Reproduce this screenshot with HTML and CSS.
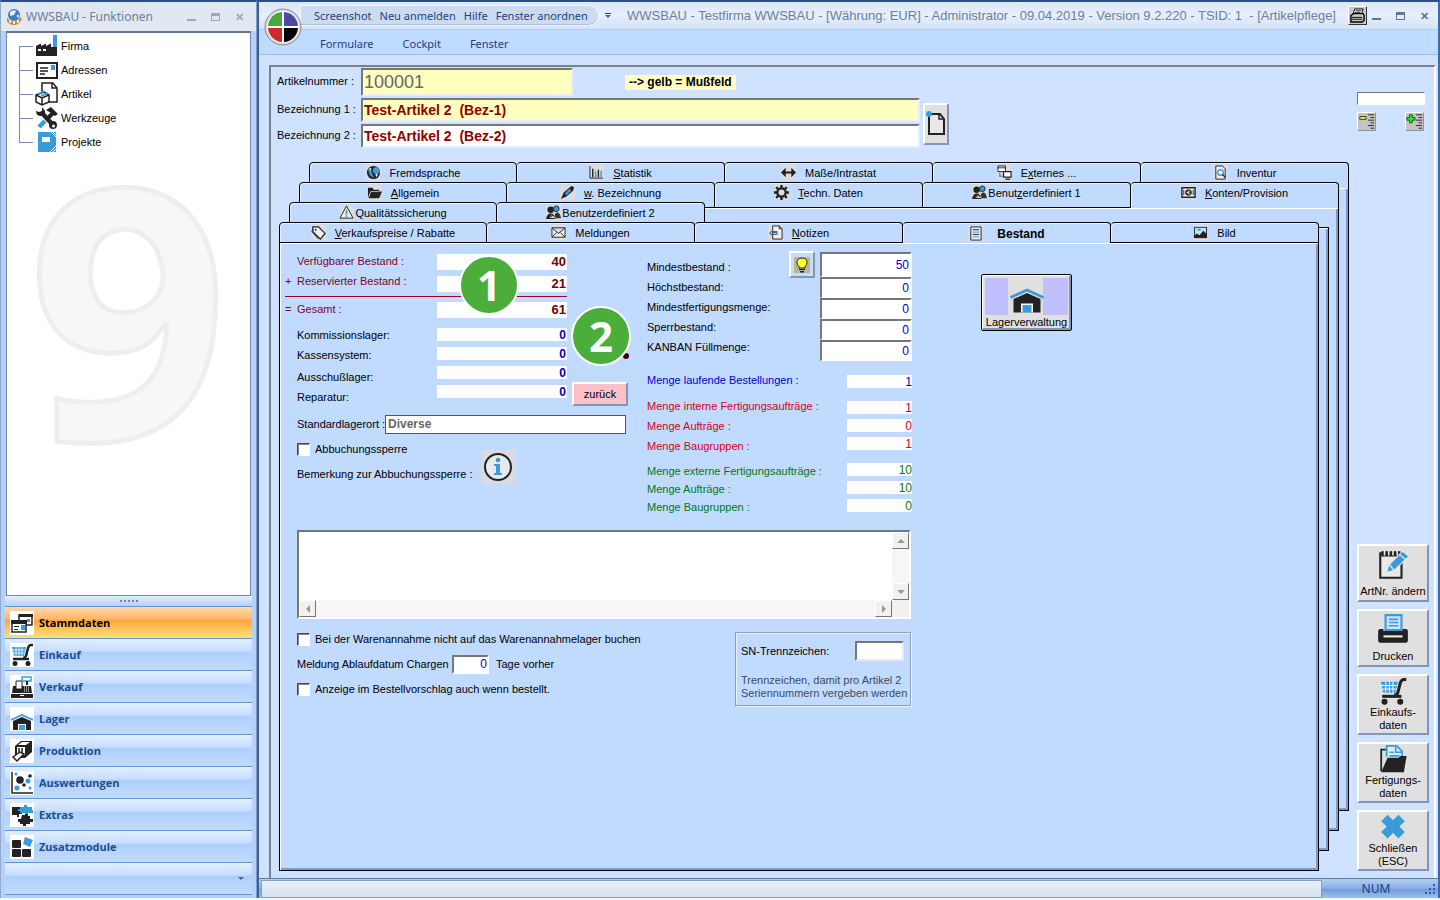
FILE: index.html
```html
<!doctype html>
<html lang="de">
<head>
<meta charset="utf-8">
<meta name="viewport" content="width=device-width,initial-scale=1">
<title>WWSBAU - Artikelpflege</title>
<link rel="stylesheet" href="styles.css">
</head>
<body>

<!-- icons -->
<svg class="sprite" width="0" height="0" aria-hidden="true">
	<symbol id="i-app" viewBox="0 0 16 16"><circle cx="8" cy="6" r="6" fill="#3a7fc4"/><path d="M4 3q3-3 6-1L8 6 4 7z" fill="#e4f2ff"/><path d="M10 7l3-2v4z" fill="#bfe0f8"/><path d="M1 8q2 5 7 4 5 0 6-4l2 2q-3 6-8 6T1 12z" fill="#d9822b"/><path d="M3 11h2v3H3zM7 12h2v3H7zM11 11h2v3h-2z" fill="#fff0d8"/></symbol>
	<symbol id="i-firma" viewBox="0 0 24 24"><path d="M1 12l5-2.500V12l5-2.500V12l5-2.500V13h6v9H1z" fill="#222"/><path d="M18 1h4v12h-4z" fill="#3a9bd9"/><path d="M3 15h3v2H3zM8 15h3v2H8z" fill="#fff"/></symbol>
	<symbol id="i-adressen" viewBox="0 0 24 24"><path d="M2 5h20v15H2z" fill="#fff" stroke="#222" stroke-width="2"/><path d="M5 10h8M5 13h8M5 16h5" stroke="#222" stroke-width="1.500"/><path d="M16 7h4v5h-4z" fill="#3a9bd9"/></symbol>
	<symbol id="i-artikel" viewBox="0 0 24 24"><path d="M7 1h11l4 5v14H7z" fill="#fff" stroke="#222" stroke-width="1.500"/><path d="M17 1v5h5" fill="none" stroke="#222" stroke-width="1.500"/><path d="M1 13l8-3 5 3v7l-7 3-6-3z" fill="#fff" stroke="#222" stroke-width="1.500"/><path d="M1 13l6 3 7-3M7 16v7" fill="none" stroke="#222" stroke-width="1.500"/><path d="M3 12l7-3M6 14l7-3" stroke="#3a9bd9" stroke-width="1.800"/></symbol>
	<symbol id="i-werkzeuge" viewBox="0 0 24 24"><path d="M6 6l12 13" stroke="#222" stroke-width="4.500"/><path d="M1 5q0 5 5 5 5 0 4-5L7 1l0 4-3 1z" fill="#222"/><circle cx="18" cy="19" r="4" fill="#222"/><circle cx="18.500" cy="20" r="1.500" fill="#fff"/><path d="M19 6L11 14" stroke="#222" stroke-width="4"/><path d="M11 4l5-3 7 7-3 2-4-3z" fill="#222"/><path d="M10 15l-6 6" stroke="#3a9bd9" stroke-width="4.500"/></symbol>
	<symbol id="i-projekte" viewBox="0 0 24 24"><path d="M3 2h18v20H3z" fill="#3a9bd9"/><path d="M7 7h8v5H7z" fill="#fff"/><path d="M16 2l5 5M18 2l3 3M15 22l6-6M18 22l3-3" stroke="#fff"/></symbol>
	<symbol id="i-stamm" viewBox="0 0 24 24"><path d="M9 4h13v10H9z" fill="#fff" stroke="#222" stroke-width="1.500"/><path d="M9 3h14v3H9z" fill="#222"/><path d="M17 8h3v3h-3z" fill="#3a9bd9"/><path d="M2 10h14v11H2z" fill="#fff" stroke="#222" stroke-width="1.500"/><path d="M1 9h16v4H1z" fill="#222"/><path d="M4 15h5v1H4zM4 18h4v1H4z" fill="#222"/><path d="M11 14h4v5h-4z" fill="#3a9bd9"/></symbol>
	<symbol id="i-cart" viewBox="0 0 24 24"><path d="M2 4h14l-2 9H4z" fill="#3a9bd9"/><path d="M2 7h13M3 10h12M6 4v9M9 4v9M12 4v9" stroke="#fff" stroke-width=".8"/><path d="M23 2h-2q-2 0-3 3l-2 8q-1 2-3 2" fill="none" stroke="#222" stroke-width="2.500"/><path d="M3 16h16" stroke="#222" stroke-width="2.500"/><circle cx="5" cy="20.500" r="2.500" fill="#222"/><circle cx="18" cy="20.500" r="2.500" fill="#222"/></symbol>
	<symbol id="i-kasse" viewBox="0 0 24 24"><path d="M1 19h22v4H1z" fill="#222"/><path d="M3 11h18l1 7H2z" fill="#222"/><path d="M6 6h6v8H6z" fill="#fff" stroke="#222"/><path d="M12 2h9v4h-9z" fill="#fff" stroke="#3a9bd9" stroke-width="1.500"/><path d="M17 6v4" stroke="#222" stroke-width="2"/><path d="M14 12h6M14 14h6M14 16h6" stroke="#fff" stroke-dasharray="1 1"/><path d="M10 20h4v1h-4z" fill="#fff"/></symbol>
	<symbol id="i-lager" viewBox="0 0 24 24"><path d="M1 13l11-5 11 5" fill="none" stroke="#3a9bd9" stroke-width="1.800"/><path d="M3 14l9-4 9 4v9H3z" fill="#222"/><path d="M8 17h8v6H8z" fill="#fff"/><path d="M9 18h6v5H9z" fill="#3a9bd9"/></symbol>
	<symbol id="i-produktion" viewBox="0 0 24 24"><path d="M5 7l6-5h11v11l-7 6H5z" fill="#222"/><path d="M7 8h8v8H7z" fill="#fff"/><path d="M8 6l4-3h8l-4 3z" fill="#fff"/><path d="M9 9v6M12 9v6" stroke="#222" stroke-width="1.500"/><path d="M3 18l7-5 4 2-7 7z" fill="#fff" stroke="#222" stroke-width="1.500"/></symbol>
	<symbol id="i-auswertung" viewBox="0 0 24 24"><path d="M2 1v21h21" fill="none" stroke="#222" stroke-width="1.500"/><circle cx="10" cy="9" r="3.800" fill="#222"/><circle cx="20" cy="5" r="1.800" fill="#222"/><circle cx="14" cy="14" r="1.800" fill="#222"/><circle cx="6" cy="3" r="1.500" fill="#3a9bd9"/><circle cx="18" cy="10" r="2.500" fill="#3a9bd9"/><circle cx="7" cy="17" r="2.500" fill="#3a9bd9"/><circle cx="20" cy="17" r="1.500" fill="#3a9bd9"/></symbol>
	<symbol id="i-extras" viewBox="0 0 24 24"><path d="M2 4h8v4h2v3h-3v3H7v-2H2z" fill="#222"/><path d="M10 4h4V2h3v2h5v3h1v3h-5v2h-3v-2h-5V8h-2V6h2z" fill="#3a9bd9"/><path d="M12 12h3v-1h3v2h2v3h3v3h-3v2h-4v2h-3v-2h-3v-2H8v-3h3z" fill="#222"/></symbol>
	<symbol id="i-module" viewBox="0 0 24 24"><rect x="2" y="5" width="9" height="8" rx="1" fill="#222"/><rect x="2" y="14" width="9" height="8" rx="1" fill="#222"/><rect x="12" y="14" width="9" height="8" rx="1" fill="#222"/><path d="M15 2l8 3-3 7-7-3z" fill="#3a9bd9"/></symbol>

	<symbol id="i-globe" viewBox="0 0 16 16"><circle cx="8" cy="8" r="7" fill="#222"/><path d="M8 3l5-1 2 6-5 2-3-3zM2 4l3 1 2 5 2 4-5-3z" fill="#3a9bd9"/><path d="M3 3l3 1-1 2zM10 10l3-1-2 4z" fill="#fff"/></symbol>
	<symbol id="i-stat" viewBox="0 0 16 16"><path d="M1 1v13h14" fill="none" stroke="#222"/><path d="M4 4v9M10 5v8" stroke="#222" stroke-width="1.500"/><path d="M7 7v6M13 6v7" stroke="#3a9bd9" stroke-width="1.500"/></symbol>
	<symbol id="i-arrows" viewBox="0 0 16 16"><path d="M0 8l5-5v4h6V3l5 5-5 5V9H5v4z" fill="#222"/></symbol>
	<symbol id="i-extern" viewBox="0 0 16 16"><path d="M1 1h8v6H1zM1 3h8" fill="#fff" stroke="#222"/><path d="M7 7h8v6H7zM9 15h5" fill="#fff" stroke="#222" stroke-width="1.300"/><path d="M3 8v4h3" fill="none" stroke="#3a9bd9" stroke-width="1.500"/></symbol>
	<symbol id="i-inventur" viewBox="0 0 16 16"><path d="M3 1h7l3 3v11H3z" fill="#eee" stroke="#222"/><circle cx="8" cy="8" r="3" fill="#fff" stroke="#3a9bd9" stroke-width="1.500"/><path d="M10 10l3 3" stroke="#222" stroke-width="1.500"/></symbol>
	<symbol id="i-folder" viewBox="0 0 16 16"><path d="M1 14V3h5l1 2h6v2H4z" fill="#222"/><path d="M4 7h12l-3 7H2z" fill="#222"/><path d="M2 12l2-5h9" fill="none" stroke="#ddd" stroke-width=".7"/></symbol>
	<symbol id="i-pen" viewBox="0 0 16 16"><path d="M1 15l3-7 8-7 3 1-1 4-7 6z" fill="#222"/><path d="M5 9l5-5 2 2-5 5z" fill="#3a9bd9"/></symbol>
	<symbol id="i-gear" viewBox="0 0 16 16"><circle cx="8" cy="8" r="4.500" fill="none" stroke="#222" stroke-width="2.500"/><path d="M8 0v3M8 13v3M0 8h3M13 8h3M2.300 2.300l2 2M11.700 11.700l2 2M13.700 2.300l-2 2M4.300 11.700l-2 2" stroke="#222" stroke-width="2.500"/></symbol>
	<symbol id="i-users" viewBox="0 0 16 16"><circle cx="5" cy="5" r="3.500" fill="#222"/><circle cx="11" cy="4" r="3" fill="#3a9bd9" stroke="#222"/><path d="M0 15q1-6 5-6t5 6z" fill="#222"/><path d="M9 14q0-6 3-6t4 6z" fill="#333"/><path d="M6 11l2 3M4 13h6" stroke="#fff"/></symbol>
	<symbol id="i-money" viewBox="0 0 16 16"><path d="M1 3h14v10H1z" fill="#fff" stroke="#222" stroke-width="1.500"/><circle cx="8" cy="8" r="3.500" fill="#222"/><path d="M10 6.500q-3-1-3 1.500t3 1.500M6 8h3" fill="none" stroke="#fff" stroke-width=".8"/><path d="M3 5v6M13 5v6" stroke="#222"/></symbol>
	<symbol id="i-warn" viewBox="0 0 16 16"><path d="M8 1l7 13H1z" fill="#eee" stroke="#222"/><path d="M8 5v5M8 11v2" stroke="#3a9bd9" stroke-width="1.800"/></symbol>
	<symbol id="i-tag" viewBox="0 0 16 16"><path d="M2 2h6l7 7-5 6-8-8z" fill="#eee" stroke="#222" stroke-width="1.300"/><circle cx="5" cy="5" r="1" fill="#222"/><path d="M2 4l-1 3 7 8" fill="none" stroke="#222"/></symbol>
	<symbol id="i-mail" viewBox="0 0 16 16"><path d="M1 3h14v10H1zM1 3l7 6 7-6M1 13l5-5M15 13l-5-5" fill="#eee" stroke="#222"/></symbol>
	<symbol id="i-note" viewBox="0 0 16 16"><path d="M5 1h7l3 3v11H5z" fill="#eee" stroke="#222"/><path d="M12 1v3h3" fill="none" stroke="#222"/><path d="M10 7H4q-3 1-1 3h6q2-1 0-2H5" fill="none" stroke="#3b6b8f" stroke-width="1.200"/></symbol>
	<symbol id="i-list" viewBox="0 0 16 16"><path d="M3 1h11v14H3z" fill="#e3eef8" stroke="#222"/><path d="M5 4h7M5 9h7" stroke="#222"/><path d="M5 6.500h7M5 11.500h7" stroke="#3a9bd9"/></symbol>
	<symbol id="i-image" viewBox="0 0 16 16"><path d="M1 2h14v12H1z" fill="#222"/><path d="M2 3h12v6l-3-3-4 5-3-2-2 2z" fill="#bfe0f8"/><path d="M5 4h3v2H5z" fill="#3a9bd9"/></symbol>

	<symbol id="i-print" viewBox="0 0 32 32"><path d="M9 2h15v14H9z" fill="#cfe6f6" stroke="#3a9bd9" stroke-width="2"/><path d="M12 6h9M12 9h9M12 12h9" stroke="#3a9bd9" stroke-width="1.500"/><path d="M2 17q0-2 2-2h3v2h18v-2h3q2 0 2 2v9q0 2-2 2H4q-2 0-2-2z" fill="#222"/><path d="M7 21h18v2H7z" fill="#eee"/></symbol>
	<symbol id="i-edit" viewBox="0 0 32 32"><path d="M4 5h20v23H4z" fill="#e9e9e9" stroke="#222" stroke-width="2"/><path d="M5 3h18v5H5z" fill="#222"/><path d="M8 2v5M12 2v5M16 2v5M20 2v5" stroke="#e9e9e9" stroke-width="1.500"/><path d="M10 23l2-7L25 3l6 5-14 13z" fill="#3a9bd9" stroke="#e9e9e9"/><path d="M13 16l4 5M22 6l6 5" stroke="#e9e9e9" stroke-width="1.200"/></symbol>
	<symbol id="i-files" viewBox="0 0 32 32"><path d="M9 13V1h11l6 6v8" fill="#dcecf6" stroke="#3a9bd9" stroke-width="2"/><path d="M19 2v6h6M12 8h5M12 12h11" fill="none" stroke="#3a9bd9" stroke-width="1.800"/><path d="M3 29V5h5" fill="none" stroke="#222" stroke-width="2"/><path d="M3 30l7-16h12l2-2h7l-3 18z" fill="#222"/></symbol>
	<symbol id="i-close" viewBox="0 0 32 32"><path d="M3 9l7-7 6 6 6-6 7 7-6 6 6 6-7 7-6-6-6 6-7-7 6-6z" fill="#3a9bd9"/></symbol>
	<symbol id="i-page" viewBox="0 0 20 28"><path d="M3 4h11l4 5v15H3z" fill="#e8e8e8" stroke="#222" stroke-width="2"/><path d="M13 4v5h5" fill="none" stroke="#222" stroke-width="1.500"/><circle cx="3" cy="4" r="3" fill="#3a9bd9"/></symbol>
	<symbol id="i-bulb" viewBox="0 0 16 16"><path d="M0 0h16v16H0z" fill="#b9b59a"/><path d="M8 1q5 0 5 4.500 0 2-2 4V11H5V9.500q-2-2-2-4Q3 1 8 1z" fill="#ff3" stroke="#222"/><path d="M5 12h6v1H5zM6 14h4v1.500H6z" fill="#222"/></symbol>
	<symbol id="i-info" viewBox="0 0 30 30"><circle cx="15" cy="15" r="13" fill="#e6eaee" stroke="#222" stroke-width="2"/><circle cx="15" cy="8" r="2.300" fill="#3a9bd9"/><path d="M11 12h6v9h2v2h-8v-2h2v-7h-2z" fill="#3a9bd9"/></symbol>
	<symbol id="i-minus" viewBox="0 0 19 19"><path d="M11 2h7M14 5h4M11 8h7M14 11h4M11 14h7M14 17h4" stroke="#222"/><path d="M2 4h7v3H2z" fill="#ff3" stroke="#222"/></symbol>
	<symbol id="i-plus" viewBox="0 0 19 19"><path d="M11 2h7M14 5h4M11 8h7M14 11h4M11 14h7M14 17h4" stroke="#222"/><path d="M4 2h3v3h3v3H7v3H4V8H1V5h3z" fill="#2e2" stroke="#151"/></symbol>
	<symbol id="i-oldprint" viewBox="0 0 16 16"><path d="M5 1h9l-2 6H3z" fill="#fff" stroke="#000"/><path d="M6 3h6M5 5h6" stroke="#000"/><path d="M1 8l3-2h10l1 2v5l-2 2H1z" fill="#ccc" stroke="#000" stroke-width="1.500"/><path d="M2 10h11M2 12h11" stroke="#000"/></symbol>
</svg>

<div class="desktop">

<aside class="win funcs">
	<header class="titlebar">
		<svg class="app"><use href="#i-app"/></svg>
		<h2>WWSBAU - Funktionen</h2>
		<div class="winbtns dim"><button class="min" aria-label="Minimieren"></button><button class="max" aria-label="Maximieren"></button><button class="x" aria-label="Schließen">✕</button></div>
	</header>
	<div class="tree">
		<ul>
			<li><a href="#firma"><svg><use href="#i-firma"/></svg>Firma</a></li>
			<li><a href="#adressen"><svg><use href="#i-adressen"/></svg>Adressen</a></li>
			<li><a href="#artikel"><svg><use href="#i-artikel"/></svg>Artikel</a></li>
			<li><a href="#werkzeuge"><svg><use href="#i-werkzeuge"/></svg>Werkzeuge</a></li>
			<li><a href="#projekte"><svg><use href="#i-projekte"/></svg>Projekte</a></li>
		</ul>
		<div class="nine">9</div>
	</div>
	<div class="splitter"><i></i><i></i><i></i><i></i><i></i></div>
	<nav class="modules">
		<button class="on"><svg><use href="#i-stamm"/></svg>Stammdaten</button>
		<button><svg><use href="#i-cart"/></svg>Einkauf</button>
		<button><svg><use href="#i-kasse"/></svg>Verkauf</button>
		<button><svg><use href="#i-lager"/></svg>Lager</button>
		<button><svg><use href="#i-produktion"/></svg>Produktion</button>
		<button><svg><use href="#i-auswertung"/></svg>Auswertungen</button>
		<button><svg><use href="#i-extras"/></svg>Extras</button>
		<button><svg><use href="#i-module"/></svg>Zusatzmodule</button>
	</nav>
	<div class="navfoot"><button aria-label="Schaltflächen konfigurieren"><span class="tri"></span></button></div>
</aside>

<main class="win app-win">
	<button class="orb" aria-label="Menü">
		<svg viewBox="0 0 38 38"><circle cx="19" cy="19" r="18" fill="#d4d6da" stroke="#8b8f98"/><circle cx="19" cy="19" r="16" fill="#fff"/><path d="M18 18V4A15 15 0 0 0 4 18z" fill="#4aa83c"/><path d="M20 18V4A15 15 0 0 1 34 18z" fill="#4a4aa0"/><path d="M18 20v14A15 15 0 0 1 4 20z" fill="#d02a2a"/><path d="M20 20v14A15 15 0 0 0 34 20z" fill="#000"/></svg>
	</button>
	<header class="titlebar">
		<div class="quick">
			<a href="#screenshot">Screenshot</a>
			<a href="#anmelden">Neu anmelden</a>
			<a href="#hilfe">Hilfe</a>
			<a href="#anordnen">Fenster anordnen</a>
		</div>
		<button class="more" aria-label="Anpassen"><span class="tri"></span></button>
		<h1>WWSBAU - Testfirma WWSBAU - [Währung: EUR] - Administrator - 09.04.2019 - Version 9.2.220 - TSID: 1&nbsp; - [Artikelpflege]</h1>
		<button class="oldprint" aria-label="Drucken"><svg><use href="#i-oldprint"/></svg></button>
		<div class="winbtns"><button class="min" aria-label="Minimieren"></button><button class="max" aria-label="Maximieren"></button><button class="x" aria-label="Schließen">✕</button></div>
	</header>
	<nav class="ribbon">
		<a href="#formulare">Formulare</a>
		<a href="#cockpit">Cockpit</a>
		<a href="#fenster">Fenster</a>
	</nav>

	<div class="form">
		<div class="main">
			<div class="head">
				<div class="fieldgrid">
					<label for="artnr">Artikelnummer :</label>
					<div class="nr"><input id="artnr" class="must" value="100001"><b class="hint">--&gt; gelb = Mußfeld</b></div>
					<label for="bez1">Bezeichnung 1 :</label>
					<input id="bez1" class="bez must" value="Test-Artikel 2&nbsp; (Bez-1)">
					<label for="bez2">Bezeichnung 2 :</label>
					<input id="bez2" class="bez" value="Test-Artikel 2&nbsp; (Bez-2)">
				</div>
				<button class="btn doc" aria-label="Text"><svg><use href="#i-page"/></svg></button>
			</div>

			<div class="stack">
				<div class="layer l1">
					<div class="tabs">
						<button><svg><use href="#i-globe"/></svg>Fremdsprache</button>
						<button><svg><use href="#i-stat"/></svg><span><u>S</u>tatistik</span></button>
						<button><svg><use href="#i-arrows"/></svg>Maße/Intrastat</button>
						<button><svg><use href="#i-extern"/></svg><span>E<u>x</u>ternes ...</span></button>
						<button class="open"><svg><use href="#i-inventur"/></svg>Inventur</button>
					</div>
					<div class="page"></div>
				</div>
				<div class="layer l2">
					<div class="tabs">
						<button><svg><use href="#i-folder"/></svg><span><u>A</u>llgemein</span></button>
						<button><svg><use href="#i-pen"/></svg><span><u>w</u>. Bezeichnung</span></button>
						<button><svg><use href="#i-gear"/></svg><span><u>T</u>echn. Daten</span></button>
						<button class="tight"><svg><use href="#i-users"/></svg><span>Benut<u>z</u>erdefiniert 1</span></button>
						<button class="open"><svg><use href="#i-money"/></svg><span><u>K</u>onten/Provision</span></button>
					</div>
					<div class="page"></div>
				</div>
				<div class="layer l3">
					<div class="tabs">
						<button class="tight"><svg><use href="#i-warn"/></svg>Qualitätssicherung</button>
						<button class="tight"><svg><use href="#i-users"/></svg>Benutzerdefiniert 2</button>
					</div>
					<div class="page"></div>
				</div>
				<div class="layer l4">
					<div class="tabs">
						<button><svg><use href="#i-tag"/></svg><span><u>V</u>erkaufspreise / Rabatte</span></button>
						<button><svg><use href="#i-mail"/></svg>Meldungen</button>
						<button><svg><use href="#i-note"/></svg><span><u>N</u>otizen</span></button>
						<button class="open current"><svg><use href="#i-list"/></svg>Bestand</button>
						<button><svg><use href="#i-image"/></svg>Bild</button>
					</div>
					<div class="page">

						<div class="upper">
							<section class="stock">
								<div class="cols">
									<div class="labels">
										<label class="sum" for="verf"><span></span>Verfügbarer Bestand :</label>
										<label class="sum" for="res"><span>+</span>Reservierter Bestand :</label>
										<div class="rule"></div>
										<label class="sum" for="ges"><span>=</span>Gesamt :</label>
										<label class="first" for="komm">Kommissionslager:</label>
										<label for="kasse">Kassensystem:</label>
										<label class="gap" for="aus">Ausschußlager:</label>
										<label for="rep">Reparatur:</label>
									</div>
									<div class="fields">
										<input class="sum" id="verf" value="40">
										<input class="sum" id="res" value="21">
										<div class="rule"></div>
										<input class="sum" id="ges" value="61">
										<input id="komm" value="0">
										<input id="kasse" value="0">
										<input id="aus" value="0">
										<input id="rep" value="0">
									</div>
									<button class="btn back">zurück</button>
									<i class="badge one">1</i>
									<i class="dot"></i>
									<i class="badge two">2</i>
								</div>
								<div class="place"><label for="ort">Standardlagerort :</label><input id="ort" value="Diverse"></div>
								<div class="lock">
									<div>
										<label class="check"><input type="checkbox">Abbuchungssperre</label>
										<p>Bemerkung zur Abbuchungssperre :</p>
									</div>
									<button class="info" aria-label="Info"><svg><use href="#i-info"/></svg></button>
								</div>
							</section>

							<section class="limits">
								<div class="labels">
									<label for="mind">Mindestbestand :</label>
									<label for="hoch">Höchstbestand:</label>
									<label for="mfm">Mindestfertigungsmenge:</label>
									<label for="sperr">Sperrbestand:</label>
									<label for="kanban">KANBAN Füllmenge:</label>
									<div class="grp blue"><label for="b1">Menge laufende Bestellungen :</label></div>
									<div class="grp red">
										<label for="r1">Menge interne Fertigungsaufträge :</label>
										<label for="r2">Menge Aufträge :</label>
										<label for="r3">Menge Baugruppen :</label>
									</div>
									<div class="grp green">
										<label for="g1">Menge externe Fertigungsaufträge :</label>
										<label for="g2">Menge Aufträge :</label>
										<label for="g3">Menge Baugruppen :</label>
									</div>
								</div>
								<button class="btn bulb" aria-label="Vorschlag"><svg><use href="#i-bulb"/></svg></button>
								<div class="fields">
									<input id="mind" class="num tall" value="50">
									<input id="hoch" class="num" value="0">
									<input id="mfm" class="num" value="0">
									<input id="sperr" class="num" value="0">
									<input id="kanban" class="num" value="0">
									<div class="grp blue"><input id="b1" value="1"></div>
									<div class="grp red"><input id="r1" value="1"><input id="r2" value="0"><input id="r3" value="1"></div>
									<div class="grp green"><input id="g1" value="10"><input id="g2" value="10"><input id="g3" value="0"></div>
								</div>
							</section>

							<button class="store"><span><svg><use href="#i-lager"/></svg></span>Lagerverwaltung</button>
						</div>

						<div class="memo">
							<textarea aria-label="Bemerkung"></textarea>
							<div class="vbar"><button aria-label="Hoch"><i class="up"></i></button><button aria-label="Runter"><i class="down"></i></button></div>
							<div class="hbar"><button aria-label="Links"><i class="left"></i></button><button aria-label="Rechts"><i class="right"></i></button></div>
						</div>

						<div class="lower">
							<div class="opts">
								<label class="check"><input type="checkbox">Bei der Warenannahme nicht auf das Warenannahmelager buchen</label>
								<div class="days"><label for="tage">Meldung Ablaufdatum Chargen</label><input id="tage" value="0"><span>Tage vorher</span></div>
								<label class="check"><input type="checkbox">Anzeige im Bestellvorschlag auch wenn bestellt.</label>
							</div>
							<div class="sn">
								<div><label for="sn">SN-Trennzeichen:</label><input id="sn"></div>
								<p>Trennzeichen, damit pro Artikel 2<br>Seriennummern vergeben werden</p>
							</div>
						</div>

					</div>
				</div>
			</div>
		</div>

		<div class="side">
			<input class="mini" aria-label="Suche">
			<div class="pm">
				<button class="btn" aria-label="Minus"><svg><use href="#i-minus"/></svg></button>
				<button class="btn" aria-label="Plus"><svg><use href="#i-plus"/></svg></button>
			</div>
			<div class="actions">
				<button class="btn"><svg><use href="#i-edit"/></svg>ArtNr. ändern</button>
				<button class="btn"><svg><use href="#i-print"/></svg>Drucken</button>
				<button class="btn big"><svg><use href="#i-cart"/></svg>Einkaufs-<br>daten</button>
				<button class="btn big"><svg><use href="#i-files"/></svg>Fertigungs-<br>daten</button>
				<button class="btn big"><svg><use href="#i-close"/></svg>Schließen<br>(ESC)</button>
			</div>
		</div>
	</div>

	<footer class="status">
		<div class="msg"></div>
		<div class="keys">NUM</div>
		<svg class="grip" viewBox="0 0 12 12"><path d="M9 1h2v2H9zM9 5h2v2H9zM5 5h2v2H5zM9 9h2v2H9zM5 9h2v2H5zM1 9h2v2H1z" fill="#2f5d9e"/></svg>
	</footer>
</main>

</div>
</body>
</html>
```
FILE: styles.css
```css
*{box-sizing:border-box;}
body{margin:0;background:#f3f6fb;font:11px/20px "Liberation Sans",Arial,sans-serif;color:#000;}
button,input,textarea{font:inherit;color:inherit;margin:0;padding:0;border:0;border-radius:0;background:none;min-width:0;}
h1,h2,p,ul{margin:0;padding:0;}
a{color:inherit;text-decoration:none;}
svg{display:block;flex:none;}
.sprite{position:absolute;}

.desktop{display:flex;min-height:100vh;padding-bottom:2px;}
.win{display:flex;flex-direction:column;border-top:2px solid #2c4f86;}

/* title bars */
.titlebar{display:flex;align-items:center;height:28px;font-family:"Noto Sans","Open Sans",sans-serif;}
.titlebar h1,.titlebar h2{font:400 13px/20px "Liberation Sans",Arial,sans-serif;color:#6b7f9c;white-space:nowrap;}
.titlebar h2{font:400 12px/20px "Noto Sans","Open Sans",sans-serif;}
.winbtns{display:flex;align-items:center;gap:15px;color:#5d7699;}
.winbtns button{width:9px;height:9px;font-size:11px;line-height:9px;}
.winbtns .min{border-bottom:2px solid;}
.winbtns .max{border:1px solid;border-top-width:3px;height:8px;}
.winbtns .x{font-weight:bold;}
.winbtns.dim{color:#9aa9bf;}

/* function window */
.funcs{width:257px;flex:none;padding:0 4px 3px;background:#b5d1f7;border-right:1px solid #7f9cc9;border-left:1px solid #93a9cc;}
.funcs .titlebar{margin:0 -4px;padding:0 12px 0 5px;gap:4px;background:linear-gradient(#dfe7f2,#e3e9f2);height:29px;}
.funcs h2{flex:1;}
.app{width:16px;height:16px;}
.tree{flex:1;position:relative;margin:0 1px;background:#fff;border:1px solid #6f87ad;border-top:2px solid #66758c;padding:3px 0 0 12px;overflow:hidden;}
.tree ul{list-style:none;border-left:1px solid #6f8dbd;margin-top:10px;height:97px;}
.tree li{height:24px;}
.tree li a{display:flex;align-items:center;position:relative;top:-12px;line-height:24px;width:max-content;gap:2px;}
.tree li a:before{content:"";width:13px;height:1px;background:#6f8dbd;}
.tree svg{width:24px;height:24px;}
.nine{position:absolute;left:21px;top:62px;width:190px;font:700 350px/420px "Open Sans",sans-serif;color:#f7f7f7;-webkit-text-stroke:5px #eee;text-align:center;}
.splitter{height:10px;display:flex;align-items:center;justify-content:center;gap:2px;background:linear-gradient(#e3efff,#b5d1f7);}
.splitter i{width:2px;height:2px;background:#6588b8;}
.modules{display:flex;flex-direction:column;border-top:1px solid #6593cf;}
.modules button{display:flex;align-items:center;gap:5px;height:32px;padding-left:5px;border-bottom:1px solid #6593cf;font:bold 11px/20px "Open Sans","Noto Sans",sans-serif;color:#204d89;background:linear-gradient(#e3efff,#c4ddff 40%,#adcfff 41%,#c0dbff);}
.modules .on{color:#000;background:linear-gradient(#ffd9ab,#ffb566 40%,#ffa53c 41%,#ffe07a);}
.modules svg{width:24px;height:24px;background:#fff;}
.navfoot{height:32px;display:flex;justify-content:flex-end;padding-right:8px;background:linear-gradient(#e3efff,#c4ddff 40%,#adcfff 41%,#c0dbff);border-bottom:1px solid #6593cf;}
.tri{display:block;border:3px solid transparent;border-top-color:#3b6aa8;border-bottom:0;}

/* main window */
.app-win{flex:1;min-width:0;position:relative;background:#cfe2ff;border-left:2px solid #3b5f9a;border-right:2px solid #3b6ab0;}
.app-win>.titlebar{padding:0 9px 0 41px;background:linear-gradient(#dde8f8,#e6effb 50%,#d4e3f8);border-bottom:1px solid #b4cce8;}
.orb{position:absolute;left:5px;top:6px;width:38px;height:38px;}
.quick{display:flex;gap:8px;width:299px;height:21px;padding-left:13px;border:1px solid #f2f7ff;border-radius:0 11px 11px 0;background:#ccdcf0;box-shadow:inset 0 -1px #a9bfdd;color:#1c3f82;line-height:20px;}
.quick a,.ribbon a{font-size:11px;white-space:nowrap;}
.more{margin:0 16px 0 6px;padding-top:1px;border-top:1px solid #1c3f82;}
.titlebar h1{flex:1;min-width:0;}
.oldprint{width:19px;height:19px;padding:1px;margin-right:5px;background:#c8c8c8;border:1px solid;border-color:#fff #333 #333 #fff;}
.oldprint svg{width:15px;height:15px;}
.ribbon{display:flex;gap:29px;height:25px;padding-left:61px;background:#bfdbff;border-bottom:1px solid #9fbce0;font-family:"Noto Sans","Open Sans",sans-serif;line-height:28px;color:#1c3f82;}

.form{flex:1;display:flex;margin:10px 2px 0 10px;border:solid;border-width:2px 2px 0 2px;border-color:#7b828c #fff #fff #7b828c;}
.main{flex:1;min-width:0;display:flex;flex-direction:column;padding:1px 0 7px 8px;}
.head{display:flex;align-items:flex-end;gap:3px;margin-left:-2px;}
.fieldgrid{display:grid;grid-template-columns:84px 559px;grid-template-rows:28px 24px 24px;row-gap:2px;align-items:center;line-height:22px;white-space:nowrap;}
.fieldgrid label{padding-bottom:2px;}
.head input{width:100%;height:100%;border:2px solid;border-color:#777 #e6eefb #e6eefb #777;background:#fff;}
.head .must{background:#ffffc0;}
.fieldgrid .nr{display:flex;align-items:center;gap:52px;height:28px;}
.head .nr input{width:212px;font-size:18px;color:#666;padding-left:1px;}
.hint{background:#ffffc0;line-height:15px;padding:0 4px;font-size:12px;}
.head .bez{font-size:14px;font-weight:bold;color:#900000;padding-left:1px;}
.btn{background:#e0e0e0;border:2px solid;border-color:#fff #8095b8 #8095b8 #fff;}
.doc{width:26px;height:42px;margin-bottom:3px;}
.doc svg{width:22px;height:28px;}

/* every tab row sits on its own sheet, front one last */
.stack{flex:1;display:grid;margin-top:14px;}
.layer{grid-area:1/1;display:flex;flex-direction:column;}
.l1{margin:0 0 60px 30px;}
.l2{margin:20px 10px 40px 20px;}
.l3{margin:40px 20px 20px 10px;}
.l4{margin:60px 30px 0 0;}
.tabs{display:flex;position:relative;height:26px;margin-bottom:-1px;}
.l4 .tabs{height:21px;}
.tabs button{width:20%;height:100%;display:flex;justify-content:center;gap:9px;line-height:20px;border:1px solid #000;border-left:0;border-radius:4px 4px 0 0;box-shadow:inset 1px 1px #e8f2ff;background:#c0dbff;white-space:nowrap;}
.tabs button:first-child{border-left:1px solid #000;}
.tabs .tight{gap:1px;}
.tabs svg{width:15px;height:15px;margin-top:2px;background:#dcdcdc;}
.tabs .open{border-bottom:0;}
.tabs .current{font-size:12px;font-weight:bold;gap:14px;padding-top:1px;}
.page{flex:1;background:#c0dbff;border:1px solid #000;box-shadow:inset 1px 1px #fff,inset -2px -2px #7d9cc9;}
.l4 .page{padding:8px 0 0 5px;}

.upper{display:flex;align-items:flex-start;}
.stock{width:362px;}
.cols{display:flex;position:relative;}
.labels{display:flex;flex-direction:column;white-space:nowrap;}
.stock .labels{width:152px;}
.stock .labels label{padding-left:12px;}
.stock .labels .sum{display:flex;padding:0;color:#800020;}
.sum span{width:12px;}
.rule{height:1px;background:#a00028;margin:5px 0 2px;}
.stock .first{margin-top:6px;}
.stock .gap{margin-top:2px;}
.stock .fields{width:130px;margin-top:3px;display:flex;flex-direction:column;}
.stock .fields input{height:13px;margin-bottom:6px;padding-right:1px;background:#fff;text-align:right;font-size:12px;font-weight:bold;color:#0000c0;}
.stock .fields .sum{height:16px;font-size:13px;color:#700000;}
.stock .fields .rule{margin:-2px 0 5px;}
.stock .fields .rule+.sum{margin-bottom:10px;}
.back{width:56px;height:24px;margin:131px 0 0 5px;background:#ffc0c8;line-height:18px;}
.badge{position:absolute;width:60px;height:60px;border:2px solid #fff;border-radius:50%;background:#4bad3a;color:#fff;font:bold 42px/56px "Open Sans",sans-serif;text-align:center;}
.one{left:174px;top:4px;}
.two{left:286px;top:55px;}
.dot{position:absolute;left:338px;top:102px;width:6px;height:6px;border-radius:50%;background:#300;}
.place{display:flex;margin:8px 0 0 12px;line-height:19px;white-space:nowrap;}
.place label{width:88px;}
.place input{width:241px;height:19px;padding-left:2px;background:#fff;border:1px solid #555;font-weight:bold;font-size:12px;color:#666;}
.lock{display:flex;align-items:flex-end;margin:5px 0 0 12px;}
.lock div{width:185px;white-space:nowrap;}
.lock p{margin-top:5px;}
.info{width:33px;height:34px;padding:2px 1px;margin-top:-5px;background:#d8dce2;}
.info svg{width:30px;height:30px;}
.check{display:flex;align-items:center;gap:5px;white-space:nowrap;}
input[type=checkbox]{appearance:none;width:13px;height:13px;background:#fff;border:1px solid;border-color:#444 #fff #fff #444;box-shadow:inset 1px 1px #888;}

.limits{display:flex;align-items:flex-start;width:265px;}
.limits .labels{width:142px;padding-top:6px;}
.bulb{width:26px;height:27px;padding:2px 3px;background:#c8dcf5;}
.bulb svg{width:16px;height:18px;}
.limits .fields{width:97px;padding:1px 0 0 5px;}
.limits .fields input{display:block;text-align:right;background:#fff;}
.limits .num{width:92px;height:21px;padding-right:1px;border:1px solid;border-width:2px 2px 1px;border-color:#777 #fff #fff #777;font-size:12px;color:#0000c0;}
.limits .tall{height:25px;}
.labels .grp{display:flex;flex-direction:column;margin-top:6px;}
.labels .blue{margin-top:13px;}
.labels .green label{line-height:18px;}
.fields .grp{width:65px;margin-left:27px;}
.fields .blue{margin-top:14px;}
.fields .red,.fields .green{margin-top:13px;}
.fields .grp input{width:65px;height:13px;margin-bottom:5px;font-size:12px;}
.blue,.blue input{color:#0000c8;}
.red,.red input{color:#d80020;}
.green,.green input{color:#007820;}

.store{width:91px;height:57px;margin:23px 0 0 69px;padding:1px;border:1px solid #000;border-radius:2px;background:#e0e0e0;box-shadow:inset 1px 1px #fff,inset -2px -2px #8095b8;line-height:14px;}
.store span{display:flex;justify-content:center;height:37px;margin:1px 2px 0;background:linear-gradient(90deg,#c0c0ff 28%,#e0e0e0 28%,#e0e0e0 70%,#c0c0ff 70%);}
.store svg{width:36px;height:36px;}

.memo{display:grid;grid-template-columns:1fr 17px;grid-template-rows:1fr 17px;width:614px;height:89px;margin:13px 0 0 12px;border:2px solid;border-color:#777 #fff #fff #777;background:#f1f1f1;}
.memo textarea{background:#fff;resize:none;width:100%;height:100%;outline:0;overflow:hidden;}
.vbar,.hbar{display:flex;justify-content:space-between;background:#f6f6f6;}
.vbar{flex-direction:column;}
.memo button{width:17px;height:17px;display:flex;align-items:center;justify-content:center;background:#f1f1f1;border:1px solid;border-color:#fff #777 #777 #fff;}
.memo i{border:4px solid transparent;}
.memo .up{border-bottom-color:#999;border-top:0;}
.memo .down{border-top-color:#999;border-bottom:0;}
.memo .left{border-right-color:#999;border-left:0;}
.memo .right{border-left-color:#999;border-right:0;}

.lower{display:flex;justify-content:space-between;align-items:flex-start;width:614px;margin:10px 0 0 12px;}
.opts{display:flex;flex-direction:column;gap:5px;}
.days{display:flex;align-items:center;}
.days label{width:155px;}
.days input{width:37px;height:19px;margin-right:7px;background:#fff;border:2px solid;border-color:#777 #fff #fff #777;text-align:right;font-size:12px;color:#0000c0;}
.sn{width:176px;height:74px;margin-top:3px;padding:8px 6px 0 5px;border:1px solid #8f9fb8;box-shadow:inset 1px 1px #e8f2ff,1px 1px #e8f2ff;white-space:nowrap;}
.sn div{display:flex;justify-content:space-between;}
.sn input{width:49px;height:20px;background:#fff;border:2px solid;border-color:#777 #e8e8e8 #e8e8e8 #777;}
.sn p{margin-top:13px;line-height:13px;color:#3d4a5c;}

/* right column */
.side{width:72px;flex:none;display:flex;flex-direction:column;margin:0 5px 0 8px;padding:25px 0 7px;}
.mini{width:68px;height:13px;background:#fff;border:1px solid;border-color:#777 #fff #fff #777;}
.pm{display:flex;gap:29px;margin-top:7px;}
.pm button{width:19px;height:19px;background:#c4c4c4;border-width:1px;}
.pm svg{width:17px;height:17px;}
.actions{margin-top:auto;display:flex;flex-direction:column;gap:7px;}
.actions button{display:flex;flex-direction:column;align-items:center;height:58px;padding-top:2px;line-height:13px;white-space:nowrap;}
.actions svg{width:34px;height:34px;margin-bottom:3px;}
.actions .big{height:61px;padding-top:1px;}
.actions .big svg{width:30px;height:29px;margin-bottom:0;}

.status{display:flex;align-items:center;height:20px;padding:0 2px;border-top:1px solid #567db0;background:linear-gradient(#b5cff2,#86aee6 50%,#6f9bdb 51%,#9dbfee);}
.msg{flex:1;height:18px;background:linear-gradient(#e8f0fa,#d5e0ee);border:1px solid #7da0cf;}
.keys{width:102px;padding-left:6px;text-align:center;font:12px/18px "Noto Sans","Open Sans",sans-serif;color:#1c3f82;}
.grip{width:12px;height:12px;}
```
